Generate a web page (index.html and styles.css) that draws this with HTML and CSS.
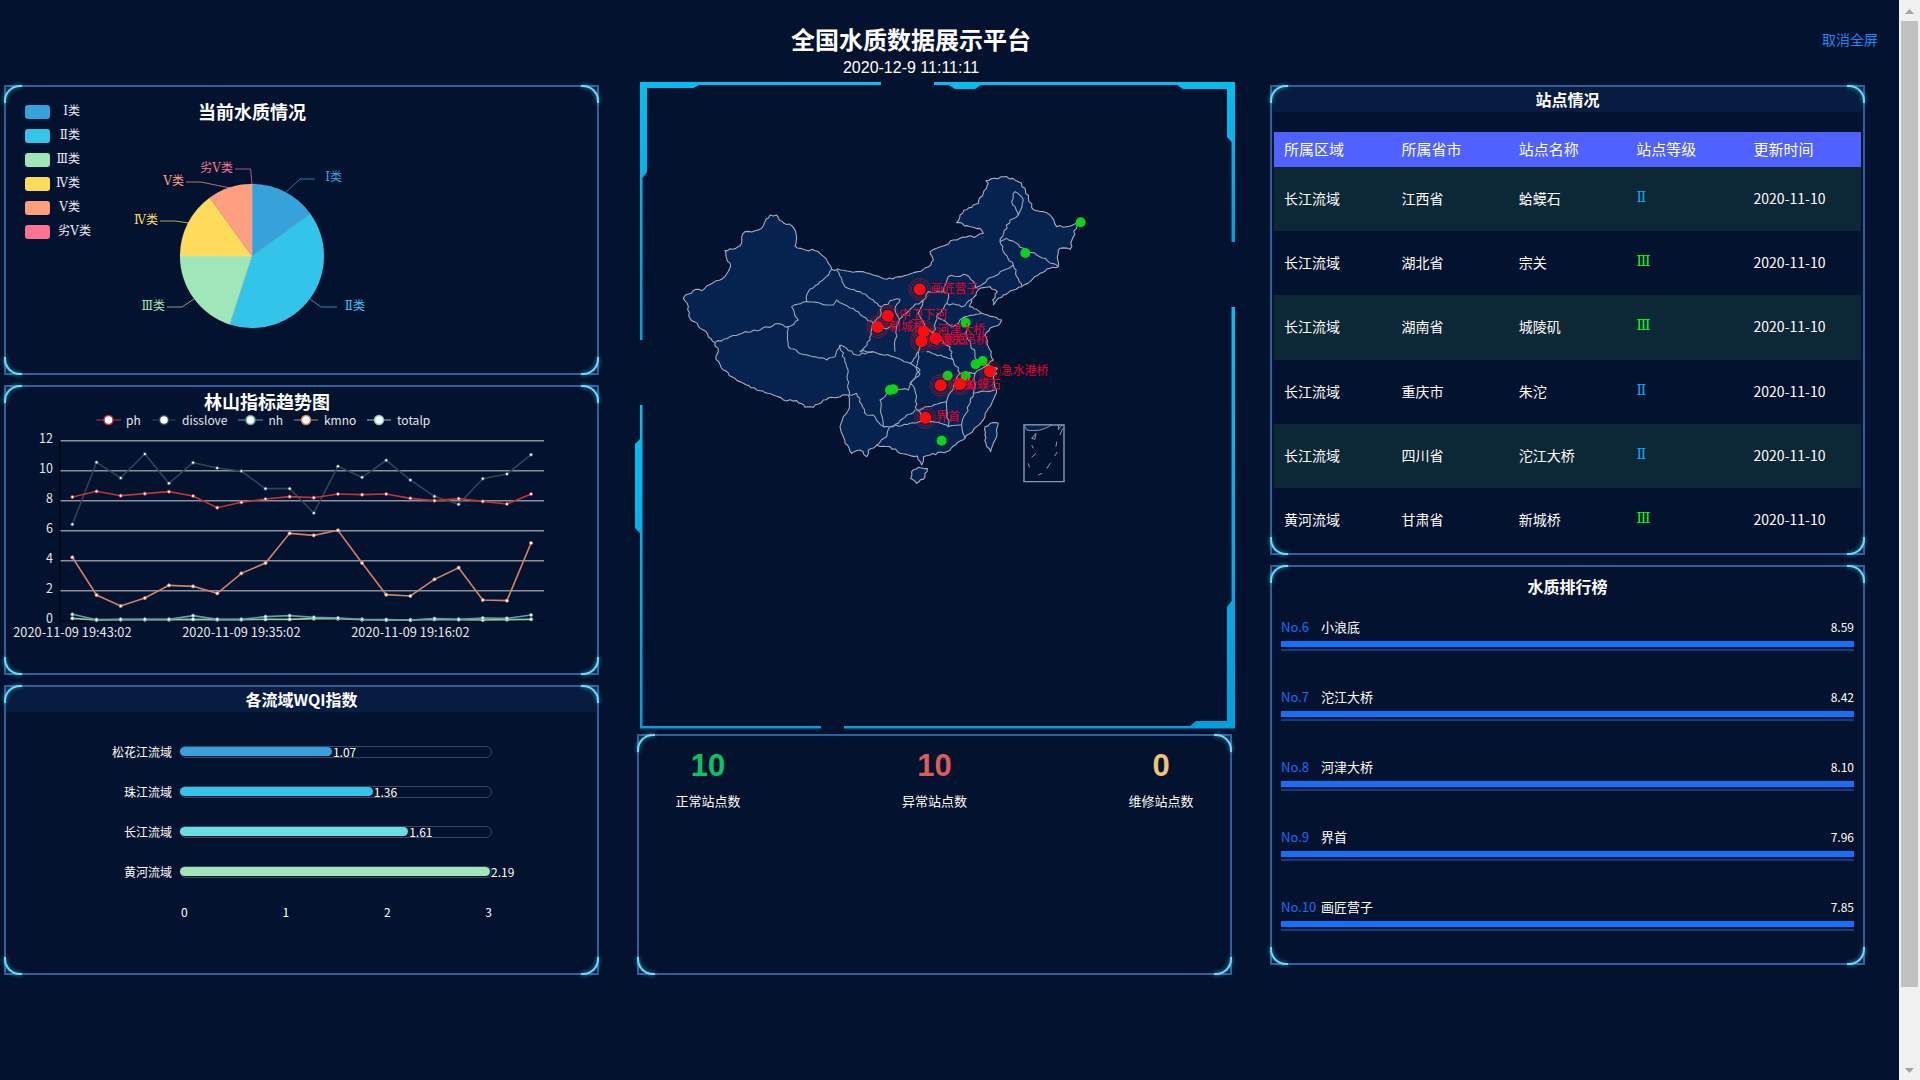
FILE: index.html
```html
<!DOCTYPE html>
<html lang="zh-CN">
<head>
<meta charset="utf-8">
<title>全国水质数据展示平台</title>
<link rel="stylesheet" href="styles.css">
</head>
<body>
<div class="app">
  <main class="page">
    <header class="header">
      <div class="header-center">
        <h1 class="title">全国水质数据展示平台</h1>
        <div class="date">2020-12-9 11:11:11</div>
      </div>
      <a class="fullscreen">取消全屏</a>
    </header>
    <div class="columns">
      <section class="col col-side">
        <div class="panel panel-chart">
          <i class="c tl"></i><i class="c tr"></i><i class="c bl"></i><i class="c br"></i>
          <svg class="chart" viewBox="6 87 591 286">
            <text class="chart-title" x="252" y="119" text-anchor="middle">当前水质情况</text>
            <g class="legend-text" text-anchor="end">
              <rect x="25" y="105" width="25" height="14" rx="3" fill="#37a2da"/><text x="80" y="115">Ⅰ类</text>
              <rect x="25" y="129" width="25" height="14" rx="3" fill="#32c5e9"/><text x="80" y="139">Ⅱ类</text>
              <rect x="25" y="153" width="25" height="14" rx="3" fill="#9fe6b8"/><text x="80" y="163">Ⅲ类</text>
              <rect x="25" y="177" width="25" height="14" rx="3" fill="#ffdb5c"/><text x="80" y="187">Ⅳ类</text>
              <rect x="25" y="201" width="25" height="14" rx="3" fill="#ff9f7f"/><text x="80" y="211">Ⅴ类</text>
              <rect x="25" y="225" width="25" height="14" rx="3" fill="#fb7293"/><text x="91" y="235">劣Ⅴ类</text>
            </g>
            <g class="pie">
              <path fill="#37a2da" d="M252 256V184A72 72 0 0 1 310.2 213.7Z"/>
              <path fill="#32c5e9" d="M252 256L310.2 213.7A72 72 0 0 1 229.8 324.5Z"/>
              <path fill="#9fe6b8" d="M252 256L229.8 324.5A72 72 0 0 1 180 256Z"/>
              <path fill="#ffdb5c" d="M252 256H180A72 72 0 0 1 209.7 197.7Z"/>
              <path fill="#ff9f7f" d="M252 256L209.7 197.7A72 72 0 0 1 252 184Z"/>
            </g>
            <g class="pie-lines">
              <polyline stroke="#37a2da" points="286,192 300,179 315,179"/>
              <polyline stroke="#32c5e9" points="310,299 321,307 337,307"/>
              <polyline stroke="#9fe6b8" points="194,299 182,307 167,307"/>
              <polyline stroke="#ffdb5c" points="189,223 175,221 160,221"/>
              <polyline stroke="#ff9f7f" points="230,188 201,182 186,182"/>
              <polyline stroke="#fb7293" points="252,184 250.6,169 235,169"/>
            </g>
            <g class="pie-labels" text-anchor="end">
              <text x="342" y="181" fill="#37a2da">Ⅰ类</text>
              <text x="365" y="310" fill="#32c5e9">Ⅱ类</text>
              <text x="165" y="310" fill="#9fe6b8">Ⅲ类</text>
              <text x="158" y="224" fill="#ffdb5c">Ⅳ类</text>
              <text x="184" y="185" fill="#ff9f7f">Ⅴ类</text>
              <text x="233" y="172" fill="#fb7293">劣Ⅴ类</text>
            </g>
          </svg>
        </div>
        <div class="panel panel-chart">
          <i class="c tl"></i><i class="c tr"></i><i class="c bl"></i><i class="c br"></i>
          <svg class="chart" id="trend" viewBox="6 387 591 286">
            <text class="chart-title" x="267" y="409" text-anchor="middle">林山指标趋势图</text>
            <g class="grid-lines">
              <line x1="60" x2="544" y1="440.7" y2="440.7"/><line x1="60" x2="544" y1="470.7" y2="470.7"/>
              <line x1="60" x2="544" y1="500.7" y2="500.7"/><line x1="60" x2="544" y1="530.7" y2="530.7"/>
              <line x1="60" x2="544" y1="560.7" y2="560.7"/><line x1="60" x2="544" y1="590.7" y2="590.7"/>
            </g>
            <path class="axes" d="M60 440V621H544"/>
            <g class="axis-text y-ticks" text-anchor="end">
              <text x="53" y="442.5">12</text><text x="53" y="472.5">10</text><text x="53" y="502.5">8</text>
              <text x="53" y="532.5">6</text><text x="53" y="562.5">4</text><text x="53" y="592.5">2</text><text x="53" y="622.5">0</text>
            </g>
            <g class="axis-text date-ticks" text-anchor="middle">
              <text x="72.4" y="636.5">2020-11-09 19:43:02</text>
              <text x="241.4" y="636.5">2020-11-09 19:35:02</text>
              <text x="410.4" y="636.5">2020-11-09 19:16:02</text>
            </g>
            <g class="axis-text line-legend">
              <line x1="96" x2="121" y1="420" y2="420" stroke="#c23531"/><circle cx="108.5" cy="420" r="4.5" stroke="#c23531"/><text x="126" y="424.5">ph</text>
              <line x1="152" x2="176" y1="420" y2="420" stroke="#2f4554"/><circle cx="164" cy="420" r="4.5" stroke="#2f4554"/><text x="182" y="424.5">disslove</text>
              <line x1="238" x2="263" y1="420" y2="420" stroke="#61a0a8"/><circle cx="250.5" cy="420" r="4.5" stroke="#61a0a8"/><text x="268.5" y="424.5">nh</text>
              <line x1="294" x2="318" y1="420" y2="420" stroke="#d48265"/><circle cx="306" cy="420" r="4.5" stroke="#d48265"/><text x="324" y="424.5">kmno</text>
              <line x1="367" x2="391" y1="420" y2="420" stroke="#91c7ae"/><circle cx="379" cy="420" r="4.5" stroke="#91c7ae"/><text x="397" y="424.5">totalp</text>
            </g>
            <g id="trend-series"></g>
          </svg>
        </div>
        <div class="panel">
          <i class="c tl"></i><i class="c tr"></i><i class="c bl"></i><i class="c br"></i>
          <h2 class="bar-title">各流域WQI指数</h2>
          <div class="wqi">
            <div class="wqi-row"><span class="wqi-name">松花江流域</span><div class="wqi-track"><div class="wqi-fill f1" style="width:49%"><span class="wqi-val">1.07</span></div></div></div>
            <div class="wqi-row"><span class="wqi-name">珠江流域</span><div class="wqi-track"><div class="wqi-fill f2" style="width:62.2%"><span class="wqi-val">1.36</span></div></div></div>
            <div class="wqi-row"><span class="wqi-name">长江流域</span><div class="wqi-track"><div class="wqi-fill f3" style="width:73.6%"><span class="wqi-val">1.61</span></div></div></div>
            <div class="wqi-row"><span class="wqi-name">黄河流域</span><div class="wqi-track"><div class="wqi-fill f4" style="width:100%"><span class="wqi-val">2.19</span></div></div></div>
            <div class="wqi-axis"><span>0</span><span>1</span><span>2</span><span>3</span></div>
          </div>
        </div>
      </section>

      <section class="col col-mid">
        <div class="map-frame">
          <svg class="map" viewBox="634 82 602 646">
            <defs>
              <linearGradient id="fr" x1="0" x2="0" y1="0" y2="1">
                <stop offset="0" stop-color="#08bdee"/><stop offset="1" stop-color="#009fdd"/>
              </linearGradient>
            </defs>
            <g class="frame">
              <path d="M640 82H881V85H699L693.5 88H647V172L642.5 178V340H640Z"/>
              <path d="M934 82H1235V242H1231.5V142L1227 137V89H1183L1177 85H981L975 89H955L948.6 85H934Z"/>
              <path d="M1235 307V728.5H844V726H1190L1196 721H1227V607L1231.5 601V307Z"/>
              <path d="M640 405H642.5V726H821V728.5H640V533L635 528V444L640 439Z"/>
            </g>
            <g transform="translate(660 160) scale(.33333)">
              <g class="province">
                <path class="rough" d="M70 415L85 402L108 388L125 392L140 378L160 368L195 350L212 318L200 295L195 272L218 268L240 258L245 232L255 215L285 212L305 205L318 178L330 165L350 165L358 180L372 190L388 192L402 205L410 235L405 258L430 268L465 272L480 280L497 295L505 310L515 328L560 333L600 335L640 345L680 358L715 350L750 342L790 328L812 315L820 300L810 275L830 265L850 258L880 240L900 235L950 228L970 220L960 205L930 200L890 188L900 165L912 150L935 142L955 130L970 100L985 70L978 62L1005 55L1040 50L1075 65L1095 85L1105 115L1122 150L1150 155L1170 165L1190 200L1220 200L1250 190L1240 230L1230 268L1200 265L1195 280L1195 320L1170 325L1140 340L1110 365L1085 380L1060 390L1030 405L1000 435L998 420L1012 395L990 380L960 385L948 405L935 418L928 440L950 448L965 460L1000 470L1025 480L1020 490L990 505L975 525L985 560L1000 600L985 615L1012 625L1000 655L1010 690L985 745L975 770L950 800L915 835L880 858L860 875L810 885L790 890L785 915L772 888L745 885L720 880L690 860L650 855L625 870L620 890L600 870L575 880L555 850L540 800L550 770L568 745L565 705L540 710L490 720L460 742L435 742L410 722L370 720L340 705L290 690L250 670L215 650L190 630L168 598L175 575L165 548L130 510L90 475L85 440Z"/>
                <path class="rough" d="M975 800L1000 788L1015 790L1010 830L992 875L978 850Z"/>
                <path class="rough" d="M755 935L775 922L802 925L795 950L770 970L752 955Z"/>
              </g>
              <g class="borders">
                <path class="rough" d="M165 548L210 530L255 515L300 510L345 492L385 500L415 480L395 440L440 425L445 395L480 365L500 350L515 328"/>
                <path class="rough" d="M385 500L385 560L415 578L460 590L500 600L525 590L540 555L565 572L590 585L640 575"/>
                <path class="rough" d="M540 555L560 620L568 705"/>
                <path class="rough" d="M440 425L480 430L520 435L530 420L580 445L610 470L640 490L630 540L600 575L640 575L700 590L750 610L780 630L755 665L745 690L700 685L660 720L670 800L640 765L620 765L590 700L568 705"/>
                <path class="rough" d="M530 330L555 380L600 395L640 420L665 440L700 420L720 418L705 450L718 478L710 500"/>
                <path class="rough" d="M665 440L660 470L640 490M710 500L660 505L640 490M710 500L705 575"/>
                <path class="rough" d="M718 478L760 440L790 420L805 395L850 395L865 350L920 345L945 370L945 385M790 420L775 460L800 505L775 575L750 610"/>
                <path class="rough" d="M850 395L865 400L860 430L830 470L820 525L800 505"/>
                <path class="rough" d="M860 430L905 440L935 418"/>
                <path class="rough" d="M945 385L1000 350L1060 315L1085 380M1060 315L1030 275L1020 245L1040 235L1090 265L1130 285L1195 320M1020 245L1050 180L1075 165L1055 125L1065 95L1090 120L1075 165"/>
                <path class="rough" d="M830 470L880 500L915 470L965 460M820 525L870 560L880 600L850 590L800 575M915 470L920 530L945 580L950 600L985 615M880 600L900 640L945 640L985 615"/>
                <path class="rough" d="M775 575L770 630L780 640L750 670L765 690L770 750L860 725L900 640M860 725L865 800L905 795L940 700L945 640M940 700L1005 690"/>
                <path class="rough" d="M905 795L915 835M765 750L700 800L670 800M770 750L790 770L800 780L750 790L690 800L680 830L650 855M800 780L865 800"/>
              </g>
              <g class="inset">
                <rect x="1092" y="795" width="120" height="170"/>
                <path class="inset-land" d="M1092 795H1175C1150 810 1130 815 1100 810Z"/>
                <path class="inset-land" d="M1115 835L1128 820L1125 838ZM1195 795L1205 795L1195 810Z"/>
                <path d="M1115 855L1120 865M1190 845L1188 860M1115 892L1128 880M1184 888L1192 876M1105 910L1108 922M1172 908L1160 926M1135 945L1146 940M1200 825L1208 805"/>
              </g>
              <g class="spots">
                <circle cx="1262" cy="187" r="15"/><circle cx="1096" cy="279" r="15"/><circle cx="917" cy="488" r="15"/>
                <circle cx="968" cy="603" r="15"/><circle cx="947" cy="613" r="15"/><circle cx="863" cy="647" r="15"/>
                <circle cx="917" cy="648" r="15"/><circle cx="700" cy="688" r="15"/><circle cx="690" cy="690" r="15"/><circle cx="845" cy="842" r="15"/>
              </g>
              <g class="alerts" id="alerts"></g>
            </g>
          </svg>
        </div>
        <div class="panel stats">
          <i class="c tl"></i><i class="c tr"></i><i class="c bl"></i><i class="c br"></i>
          <div class="stat"><b class="stat-num ok">10</b><span class="stat-label">正常站点数</span></div>
          <div class="stat"><b class="stat-num bad">10</b><span class="stat-label">异常站点数</span></div>
          <div class="stat"><b class="stat-num fix">0</b><span class="stat-label">维修站点数</span></div>
        </div>
      </section>

      <section class="col col-side">
        <div class="panel panel-table">
          <i class="c tl"></i><i class="c tr"></i><i class="c bl"></i><i class="c br"></i>
          <h2 class="bar-title">站点情况</h2>
          <table class="sites">
            <thead><tr><th>所属区域</th><th>所属省市</th><th>站点名称</th><th>站点等级</th><th>更新时间</th></tr></thead>
            <tbody>
              <tr><td>长江流域</td><td>江西省</td><td>蛤蟆石</td><td class="g2">Ⅱ</td><td>2020-11-10</td></tr>
              <tr><td>长江流域</td><td>湖北省</td><td>宗关</td><td class="g3">Ⅲ</td><td>2020-11-10</td></tr>
              <tr><td>长江流域</td><td>湖南省</td><td>城陵矶</td><td class="g3">Ⅲ</td><td>2020-11-10</td></tr>
              <tr><td>长江流域</td><td>重庆市</td><td>朱沱</td><td class="g2">Ⅱ</td><td>2020-11-10</td></tr>
              <tr><td>长江流域</td><td>四川省</td><td>沱江大桥</td><td class="g2">Ⅱ</td><td>2020-11-10</td></tr>
              <tr><td>黄河流域</td><td>甘肃省</td><td>新城桥</td><td class="g3">Ⅲ</td><td>2020-11-10</td></tr>
            </tbody>
          </table>
        </div>
        <div class="panel panel-rank">
          <i class="c tl"></i><i class="c tr"></i><i class="c bl"></i><i class="c br"></i>
          <h2 class="rank-title">水质排行榜</h2>
          <ul class="rank">
            <li class="rank-item"><div class="rank-text"><span class="rank-no">No.6</span><span class="rank-name">小浪底</span><span class="rank-val">8.59</span></div><div class="rank-bar"></div></li>
            <li class="rank-item"><div class="rank-text"><span class="rank-no">No.7</span><span class="rank-name">沱江大桥</span><span class="rank-val">8.42</span></div><div class="rank-bar"></div></li>
            <li class="rank-item"><div class="rank-text"><span class="rank-no">No.8</span><span class="rank-name">河津大桥</span><span class="rank-val">8.10</span></div><div class="rank-bar"></div></li>
            <li class="rank-item"><div class="rank-text"><span class="rank-no">No.9</span><span class="rank-name">界首</span><span class="rank-val">7.96</span></div><div class="rank-bar"></div></li>
            <li class="rank-item"><div class="rank-text"><span class="rank-no">No.10</span><span class="rank-name">画匠营子</span><span class="rank-val">7.85</span></div><div class="rank-bar"></div></li>
          </ul>
        </div>
      </section>
    </div>
  </main>
  <aside class="scrollbar">
    <svg class="sb-arrow" viewBox="0 0 9 5"><path d="M4.5 0L9 5H0Z"/></svg>
    <div class="sb-thumb"></div>
    <div class="sb-rest"></div>
    <svg class="sb-arrow" viewBox="0 0 9 5"><path d="M0 0H9L4.5 5Z"/></svg>
  </aside>
</div>
<script src="script.js"></script>
</body>
</html>
```
FILE: styles.css
```css
* { box-sizing: border-box; }
html, body { margin: 0; height: 100%; }
body {
  background: #03122e;
  color: #fff;
  font-family: "Noto Sans CJK SC", "Noto Sans", sans-serif;
  overflow: hidden;
}
.app { display: flex; width: 1920px; height: 1080px; }
.page { width: 1899px; flex: none; }

.header { display: flex; height: 82px; }
.header-center { width: 1822px; display: flex; flex-direction: column; align-items: center; padding-top: 21px; }
.title { margin: 0; font-size: 24px; line-height: 36px; font-weight: 700; }
.date { font-family: "Liberation Sans", sans-serif; font-size: 16px; line-height: 20px; margin-top: 1px; }
.fullscreen { font-size: 14px; line-height: 20px; margin-top: 29px; color: #1e88f0; }

.columns { display: grid; grid-template-columns: 595px 595px 595px; column-gap: 38px; padding-left: 4px; }
.col { display: flex; flex-direction: column; }
.col-side { padding-top: 3px; gap: 10px; }
.col-mid { gap: 6px; }

.panel { position: relative; border: 2px solid #2e609b; height: 290px; }
.c { position: absolute; width: 18px; height: 18px; border: 0 solid #74d9f3; filter: drop-shadow(0 0 2px #3bb6e8); }
.tl { left: -2px; top: -2px; border-width: 2.5px 0 0 2.5px; border-top-left-radius: 16px; }
.tr { right: -2px; top: -2px; border-width: 2.5px 2.5px 0 0; border-top-right-radius: 16px; }
.bl { left: -2px; bottom: -2px; border-width: 0 0 2.5px 2.5px; border-bottom-left-radius: 16px; }
.br { right: -2px; bottom: -2px; border-width: 0 2.5px 2.5px 0; border-bottom-right-radius: 16px; }

.chart { display: block; width: 100%; height: 100%; }
.chart-title { fill: #fff; font-size: 18px; font-weight: 700; }
.legend-text text, .pie-labels text { font-family: "DejaVu Serif", "Noto Sans CJK SC", sans-serif; font-size: 12px; }
.legend-text text { fill: #e8ecf2; }
.pie path { stroke: rgba(255, 255, 255, .25); stroke-width: .5; }
.pie-lines polyline { fill: none; stroke-width: 1; opacity: .7; }
.grid-lines line { stroke: #8b909b; stroke-width: 1.5; }
.axes { fill: none; stroke: #000; stroke-width: 1; }
.axis-text text { fill: #e4e7ec; font-size: 12px; }
.y-ticks text { font-size: 12.5px; }
.date-ticks text { font-size: 12.8px; }
.line-legend line { stroke-width: 1; }
.line-legend circle { fill: #fff; stroke-width: 1.5; }
.series { fill: none; stroke-width: 1.6; }
.series-dots circle { fill: #fff; stroke-width: .8; }

.bar-title { margin: 0; height: 25px; background: #071c40; font-size: 16px; line-height: 25px; font-weight: 700; text-align: center; }
.wqi { padding: 20px 0 0 0; }
.wqi-row { display: flex; align-items: center; height: 40px; }
.wqi-name { width: 166px; margin-right: 8px; padding-bottom: 2px; text-align: right; font-size: 12px; }
.wqi-track { width: 312px; height: 12px; border: 1.5px solid #3a4560; border-radius: 6px; }
.wqi-fill { position: relative; height: 9px; margin-left: -1px; border-radius: 4.5px; }
.f1 { background: #37a2da; } .f2 { background: #32c5e9; } .f3 { background: #67e0e3; } .f4 { background: #9fe6b8; }
.wqi-val { position: absolute; left: 100%; top: -3px; margin-left: 1px; font-size: 12px; line-height: 16px; }
.wqi-axis { display: flex; justify-content: space-between; width: 311px; margin-left: 175px; height: 38px; align-items: center; font-size: 12px; }

.map-frame { height: 646px; margin-left: -3px; width: 602px; }
.map { display: block; width: 602px; height: 646px; overflow: visible; }
.frame path { fill: url(#fr); }
.province path { fill: #06234f; stroke: #a3aec2; stroke-width: 1.1; vector-effect: non-scaling-stroke; stroke-linejoin: round; }
.borders path { fill: none; stroke: #9ca8be; stroke-width: 1.1; vector-effect: non-scaling-stroke; stroke-linejoin: round; }
.inset rect { fill: none; stroke: #8c98af; stroke-width: 1.4; vector-effect: non-scaling-stroke; }
.inset path { fill: none; stroke: #8c98af; stroke-width: 1; vector-effect: non-scaling-stroke; }
.inset path.inset-land { fill: #06234f; }
.spots circle { fill: #0cd316; }
.alerts .dot { fill: #ff0a0a; }
.alerts .ring { fill: none; stroke: rgba(255, 20, 20, .45); stroke-width: 1; vector-effect: non-scaling-stroke; }
.alerts text { fill: #e8002c; font-size: 36px; }

.stats { height: 241px; display: flex; justify-content: space-between; align-items: flex-start; padding: 12px 36px 0; }
.stat { width: 66px; display: flex; flex-direction: column; align-items: center; }
.stat-num { font-family: "Liberation Sans", sans-serif; font-size: 31px; line-height: 36px; font-weight: 700; }
.stat-label { font-size: 13px; line-height: 20px; white-space: nowrap; margin-top: 7px; }
.ok { color: #0dc35f; } .bad { color: #dc5b5b; } .fix { color: #f0c27a; }

.panel-table { height: 470px; }
.sites { display: table; width: 587px; margin: 20px 0 0 2px; border-collapse: collapse; table-layout: fixed; }
.sites th { height: 35px; padding: 0 10px 2px; background: #4f62ff; font-size: 15px; font-weight: 400; text-align: left; }
.sites td { height: 64.2px; padding: 0 10px 2px; font-size: 14px; }
.sites tbody tr:nth-child(odd) { background: #0c2735; }
.sites td.g2, .sites td.g3 { font-family: "DejaVu Serif", "Noto Sans CJK SC", sans-serif; font-size: 15px; padding-bottom: 4px; }
.g2 { color: #07a6ef; } .g3 { color: #0df51f; }

.panel-rank { height: 400px; }
.rank-title { margin: 0; padding-top: 7px; font-size: 16px; line-height: 24px; font-weight: 700; text-align: center; }
.rank { list-style: none; margin: 0; padding: 18px 9px 0; }
.rank-item { height: 70px; }
.rank-text { display: flex; align-items: center; height: 20px; font-size: 13px; }
.rank-no { width: 40px; color: #1370fb; }
.rank-name { flex: 1; }
.rank-val { font-size: 12px; }
.rank-bar { height: 10px; margin-top: 5px; border-top: 6px solid #1370fb; border-bottom: 2px solid #123d82; }

.scrollbar { width: 21px; background: #f1f1f1; display: flex; flex-direction: column; align-items: flex-end; }
.sb-arrow { display: block; width: 9px; height: 5px; margin: 9px 6px 7px 0; fill: #a3a3a3; flex: none; }
.sb-thumb { width: 17px; height: 966px; margin-right: 2px; background: #c1c1c1; flex: none; }
.sb-rest { flex: 1; }
```
FILE: script.js
```js
var NS = 'http://www.w3.org/2000/svg';
function el(name, attrs, parent) {
  var n = document.createElementNS(NS, name);
  for (var k in attrs) n.setAttribute(k, attrs[k]);
  parent.appendChild(n);
  return n;
}
var series = [
  ['#91c7ae', [715,720,719,719,719,718,719,719,718,718,716,716,719,720,720,718,719,720,719,718]],
  ['#61a0a8', [703,719,718,718,718,707,718,718,710,707,712,714,718,719,720,716,718,714,715,705]],
  ['#d48265', [532,645,678,654,616,619,640,580,549,460,466,451,549,644,648,598,563,660,662,489]],
  ['#2f4554', [433,247,294,222,310,248,264,273,326,326,399,259,292,241,300,349,373,296,282,224]],
  ['#c23531', [351,334,347,341,335,348,383,367,357,350,353,342,344,342,355,362,356,364,372,342]]
];
var host = document.getElementById('trend-series');
series.forEach(function (s) {
  var pts = s[1].map(function (v, i) { return [72.4 + 24.14 * i, 380 + v / 3]; });
  el('polyline', { 'class': 'series', stroke: s[0], points: pts.join(' ') }, host);
  var dots = el('g', { 'class': 'series-dots', stroke: s[0] }, host);
  pts.forEach(function (p) { el('circle', { cx: p[0], cy: p[1], r: 1.6 }, dots); });
});
var alerts = [
  [779,388,'画匠营子',812,398],[684,467,'中卫下河',717,477],[653,501,'新城桥',687,512],
  [791,514,'河津大桥',832,522],[827,535,'潼关吊桥',840,552],[784,544,'小浪底',815,552],
  [990,634,'急水港桥',1022,644],[842,676,'宗关',876,686],[900,672,'蛤蟆石',915,686],[796,773,'界首',828,783]
];
var g = document.getElementById('alerts');
alerts.forEach(function (a) {
  el('circle', { 'class': 'ring', cx: a[0], cy: a[1], r: 32 }, g);
  el('circle', { 'class': 'ring', cx: a[0], cy: a[1], r: 25 }, g);
  el('circle', { 'class': 'dot', cx: a[0], cy: a[1], r: 18 }, g);
  var t = el('text', { x: a[3], y: a[4] }, g);
  t.textContent = a[2];
});
/* Map borders are traced coarsely; break each long segment into short, slightly
   offset steps so that the lines read as natural boundaries. */
var seed = 7;
function rnd() { seed = (seed * 16807) % 2147483647; return seed / 2147483647 - 0.5; }
Array.prototype.forEach.call(document.querySelectorAll('.rough'), function (p) {
  var closed = /Z\s*$/.test(p.getAttribute('d'));
  var out = '';
  p.getAttribute('d').split('M').filter(Boolean).forEach(function (sub) {
    var pts = sub.replace('Z', '').split('L').map(function (c) { return c.trim().split(/\s+/).map(Number); });
    if (closed) pts.push(pts[0]);
    out += 'M' + pts[0].join(' ');
    for (var i = 1; i < pts.length; i++) {
      var a = pts[i - 1], b = pts[i], dx = b[0] - a[0], dy = b[1] - a[1];
      var len = Math.sqrt(dx * dx + dy * dy), n = Math.max(1, Math.round(len / 9));
      for (var j = 1; j < n; j++) {
        var o = rnd() * 7, t = j / n;
        out += 'L' + (a[0] + dx * t - dy / len * o).toFixed(1) + ' ' + (a[1] + dy * t + dx / len * o).toFixed(1);
      }
      out += 'L' + b.join(' ');
    }
    if (closed) out += 'Z';
  });
  p.setAttribute('d', out);
});
```
